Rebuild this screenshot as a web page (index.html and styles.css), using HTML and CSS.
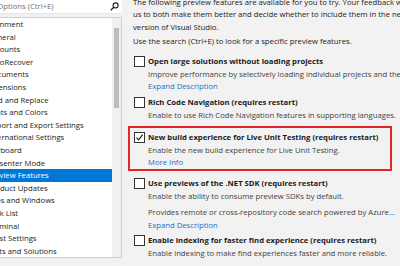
FILE: index.html
```html
<!DOCTYPE html>
<html>
<head>
<meta charset="utf-8">
<link rel="stylesheet" href="styles.css">
</head>
<body>
<div class="dialog">
  <aside class="nav">
    <div class="search">
      <span class="ph">Search Options (Ctrl+E)</span>
      <svg class="mag" width="9" height="9" viewBox="0 0 9 9"><circle cx="5.6" cy="3.4" r="2.5" fill="none" stroke="#1e1e1e" stroke-width="1.1"/><line x1="3.8" y1="5.2" x2="0.8" y2="8.2" stroke="#1e1e1e" stroke-width="1.3"/></svg>
    </div>
    <div class="tree">
      <ul class="items">
        <li class="l0">Environment</li>
        <li class="l1">General</li>
        <li class="l1">Accounts</li>
        <li class="l1">AutoRecover</li>
        <li class="l1">Documents</li>
        <li class="l1">Extensions</li>
        <li class="l1">Find and Replace</li>
        <li class="l1">Fonts and Colors</li>
        <li class="l1">Import and Export Settings</li>
        <li class="l1">International Settings</li>
        <li class="l1">Keyboard</li>
        <li class="l1">Presenter Mode</li>
        <li class="l1 sel">Preview Features</li>
        <li class="l1">Product Updates</li>
        <li class="l1">Tabs and Windows</li>
        <li class="l1">Task List</li>
        <li class="l1">Terminal</li>
        <li class="l1">Trust Settings</li>
        <li class="l0">Projects and Solutions</li>
      </ul>
      <div class="vscroll"><div class="thumb"></div></div>
    </div>
  </aside>
  <main class="content">
    <div class="intro">
      <div class="ln">The following preview features are available for you to try. Your feedback will help</div>
      <div class="ln">us to both make them better and decide whether to include them in the next</div>
      <div class="ln">version of Visual Studio.</div>
    </div>
    <div class="hint">Use the search (Ctrl+E) to look for a specific preview features.</div>

    <div class="feature">
      <span class="cb"></span>
      <div class="ftext">
        <div class="title">Open large solutions without loading projects</div>
        <div class="desc">Improve performance by selectively loading individual projects and their dependencies.</div>
        <div class="link">Expand Description</div>
      </div>
    </div>

    <div class="feature">
      <span class="cb"></span>
      <div class="ftext">
        <div class="title">Rich Code Navigation (requires restart)</div>
        <div class="desc">Enable to use Rich Code Navigation features in supporting languages.</div>
      </div>
    </div>

    <div class="feature highlight">
      <span class="cb checked"><svg width="9" height="9" viewBox="0 0 9 9"><path d="M1.5 4.6 L3.6 6.8 L7.6 1.6" fill="none" stroke="#1e1e1e" stroke-width="1.2"/></svg></span>
      <div class="ftext">
        <div class="title">New build experience for Live Unit Testing (requires restart)</div>
        <div class="desc">Enable the new build experience for Live Unit Testing.</div>
        <div class="link">More Info</div>
      </div>
    </div>

    <div class="feature">
      <span class="cb"></span>
      <div class="ftext">
        <div class="title">Use previews of the .NET SDK (requires restart)</div>
        <div class="desc">Enable the ability to consume preview SDKs by default.</div>
        <div class="desc extra">Provides remote or cross-repository code search powered by Azure...</div>
        <div class="link">Expand Description</div>
      </div>
    </div>

    <div class="feature">
      <span class="cb"></span>
      <div class="ftext">
        <div class="title">Enable indexing for faster find experience (requires restart)</div>
        <div class="desc">Enable indexing to make find experiences faster and more reliable.</div>
      </div>
    </div>
  </main>
</div>
</body>
</html>
```

FILE: styles.css
```css
html, body {
  margin: 0;
  padding: 0;
}
body {
  width: 400px;
  height: 266px;
  overflow: hidden;
  background: #f2f2f2;
  font-family: "Open Sans", "Noto Sans", sans-serif;
  font-size: 7.7px;
  color: #1b1b1b;
}
.dialog {
  display: flex;
  align-items: flex-start;
  height: 266px;
}
.nav {
  width: 122px;
  flex: none;
  overflow: hidden;
}
.search {
  height: 13px;
  background: #fff;
  display: flex;
  align-items: center;
  justify-content: space-between;
  overflow: hidden;
  border-bottom: 1px solid #e6e6e6;
}
.ph {
  color: #717171;
  white-space: nowrap;
  margin-left: -29px;
  line-height: 13px;
}
.mag {
  margin-right: 3px;
  flex: none;
}
.tree {
  margin-top: 3px;
  height: 239px;
  background: #fff;
  border: 1px solid #cfcfcf;
  border-left: none;
  display: flex;
  overflow: hidden;
}
.items {
  list-style: none;
  margin: 0;
  padding: 0;
  flex: 1;
  min-width: 0;
  overflow: hidden;
}
.items li {
  height: 12.6px;
  line-height: 12.6px;
  white-space: nowrap;
}
.l0 { text-indent: -23px; }
.l1 { text-indent: -12.5px; }
.sel {
  background: #0078d7;
  color: #fff;
}
.vscroll {
  width: 9px;
  flex: none;
  background: #f0f0f0;
}
.thumb {
  margin: 10px 0 0 2px;
  width: 5px;
  height: 80px;
  background: #bdbdbd;
}
.content {
  flex: 1;
  min-width: 0;
  padding-left: 11px;
  overflow: hidden;
  white-space: nowrap;
}
.intro {
  margin-top: -4px;
  line-height: 12.3px;
}
.hint {
  margin-top: 2px;
  line-height: 12.3px;
  margin-bottom: 8px;
}
.feature {
  display: flex;
  align-items: flex-start;
  margin-bottom: 3px;
  line-height: 12.6px;
}
.cb {
  width: 9px;
  height: 9px;
  border: 1px solid #333;
  background: #fff;
  flex: none;
  margin-top: 1px;
  margin-left: 1px;
  margin-right: 3px;
  display: flex;
}
.title {
  font-weight: 700;
}
.desc {
  color: #3f3f3f;
}
.desc.extra {
  margin-top: 4px;
}
.link {
  color: #1a6fc4;
}
.highlight {
  margin-left: -5px;
  padding: 3px 0 0 3px;
  width: 257px;
  border: 2px solid #e3242b;
  margin-top: 5px;
  margin-bottom: 6px;
}
```
